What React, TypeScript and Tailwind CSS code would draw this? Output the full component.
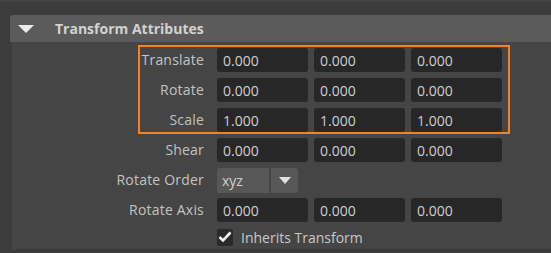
import React from 'react'

const font = { fontFamily: '"Open Sans", "Noto Sans", "Liberation Sans", sans-serif' }

type Row = { label: string; values: string[] }

const rows: Row[] = [
  { label: 'Translate', values: ['0.000', '0.000', '0.000'] },
  { label: 'Rotate', values: ['0.000', '0.000', '0.000'] },
  { label: 'Scale', values: ['1.000', '1.000', '1.000'] },
  { label: 'Shear', values: ['0.000', '0.000', '0.000'] },
]

function Label({ children }: { children: React.ReactNode }) {
  return (
    <div className="w-[193px] shrink-0 pr-[1px] text-right text-[14px] leading-none tracking-[0.2px] text-[#c3c3c3]">
      {children}
    </div>
  )
}

function Field({ value }: { value: string }) {
  return (
    <div className="flex h-[24px] w-[91px] items-center rounded-[3px] bg-[#272727] pl-[6px] text-[14px] text-[#cfcfcf]">
      {value}
    </div>
  )
}

function VectorRow({ label, values }: Row) {
  return (
    <div className="flex h-[24px] items-center gap-[12px]">
      <Label>{label}</Label>
      <div className="flex gap-[6px]">
        {values.map((v, i) => (
          <Field key={i} value={v} />
        ))}
      </div>
    </div>
  )
}

export default function App() {
  return (
    <div className="relative h-[253px] w-[551px] overflow-hidden bg-[#3c3c3c]" style={font}>
      <div className="h-[2px] bg-[#434343]" />
      <div className="h-[13px]" />

      {/* section header */}
      <div className="ml-[10px] flex h-[27px] items-center rounded-tl-[3px] bg-[#5b5b5b]">
        <svg width="16" height="8" viewBox="0 0 16 8" className="ml-[8px]">
          <path d="M0 0 H16 L8 8 Z" fill="#ececec" />
        </svg>
        <span className="ml-[21px] text-[14px] font-bold text-[#d2d2d2]">Transform Attributes</span>
      </div>

      {/* body */}
      <div className="ml-[12px] flex h-[207px] flex-col gap-[6px] bg-[#454545] pt-[6px]">
        {rows.map((r) => (
          <VectorRow key={r.label} {...r} />
        ))}

        <div className="flex h-[24px] items-center gap-[12px]">
          <Label>Rotate Order</Label>
          <div className="flex gap-[2px]">
            <div className="flex h-[25px] w-[52px] items-center rounded-l-[3px] bg-[#585858] pl-[5px] pt-[1px] text-[14px] text-[#cfcfcf]">
              xyz
            </div>
            <div className="flex h-[25px] w-[27px] items-center justify-center rounded-r-[3px] bg-[#585858]">
              <svg width="12" height="7" viewBox="0 0 12 7">
                <path d="M0 0 H12 L6 7 Z" fill="#e2e2e2" />
              </svg>
            </div>
          </div>
        </div>

        <VectorRow label="Rotate Axis" values={['0.000', '0.000', '0.000']} />

        <div className="flex h-[18px] items-center gap-[12px]">
          <div className="w-[193px] shrink-0" />
          <div className="flex items-center gap-[8px]">
            <div className="flex h-[17px] w-[16px] items-center justify-center rounded-[2px] bg-[#2a2a2a]">
              <svg width="14" height="12" viewBox="0 0 14 12">
                <path d="M1.5 6 L5 9.5 L12.5 1.5" fill="none" stroke="#f4f4f4" strokeWidth="2.6" />
              </svg>
            </div>
            <span className="text-[14px] text-[#c8c8c8]">Inherits Transform</span>
          </div>
        </div>
      </div>

      {/* highlight annotation */}
      <div className="absolute left-[138px] top-[45px] h-[89px] w-[372px] border-2 border-[#f7821b]" />
    </div>
  )
}
